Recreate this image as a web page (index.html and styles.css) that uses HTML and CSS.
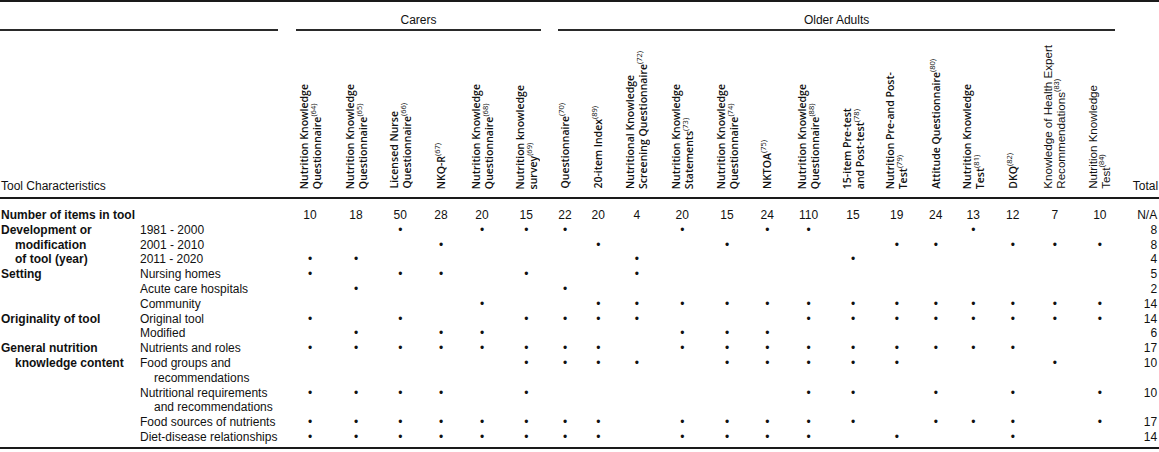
FILE: index.html
```html
<!DOCTYPE html>
<html lang="en">
<head>
<meta charset="utf-8">
<title>Tool Characteristics</title>
<link rel="stylesheet" href="styles.css">
</head>
<body>
<table class="tbl">
  <colgroup>
    <col class="w-a"><col class="w-b">
    <col class="w1"><col class="w2"><col class="w3"><col class="w4"><col class="w5"><col class="w6">
    <col class="w7"><col class="w8"><col class="w9"><col class="w10"><col class="w11"><col class="w12"><col class="w13">
    <col class="w14"><col class="w15"><col class="w16"><col class="w17"><col class="w18"><col class="w19"><col class="w20">
    <col class="w-t">
  </colgroup>
  <thead>
    <tr class="groups">
      <th colspan="2"><div class="rule rule-stub">&nbsp;</div></th>
      <th colspan="6"><div class="rule">Carers</div></th>
      <th colspan="14"><div class="rule">Older Adults</div></th>
      <th></th>
    </tr>
    <tr class="cols">
      <th colspan="2" class="stubhead">Tool Characteristics</th>
      <th class="rot"><div class="vt">Nutrition Knowledge<br>Questionnaire<sup>(64)</sup></div></th>
      <th class="rot"><div class="vt">Nutrition Knowledge<br>Questionnaire<sup>(65)</sup></div></th>
      <th class="rot"><div class="vt">Licensed Nurse<br>Questionnaire<sup>(66)</sup></div></th>
      <th class="rot"><div class="vt">NKQ-R<sup>(67)</sup></div></th>
      <th class="rot"><div class="vt">Nutrition Knowledge<br>Questionnaire<sup>(68)</sup></div></th>
      <th class="rot"><div class="vt">Nutrition knowledge<br>survey<sup>(69)</sup></div></th>
      <th class="rot"><div class="vt">Questionnaire<sup>(70)</sup></div></th>
      <th class="rot"><div class="vt">20-item Index<sup>(89)</sup></div></th>
      <th class="rot"><div class="vt">Nutritional Knowledge<br>Screening Questionnaire<sup>(72)</sup></div></th>
      <th class="rot"><div class="vt">Nutrition Knowledge<br>Statements<sup>(73)</sup></div></th>
      <th class="rot"><div class="vt">Nutrition Knowledge<br>Questionnaire<sup>(74)</sup></div></th>
      <th class="rot"><div class="vt">NKTOA<sup>(75)</sup></div></th>
      <th class="rot"><div class="vt">Nutrition Knowledge<br>Questionnaire<sup>(88)</sup></div></th>
      <th class="rot"><div class="vt">15-item Pre-test<br>and Post-test<sup>(78)</sup></div></th>
      <th class="rot"><div class="vt">Nutrition Pre-and Post-<br>Test<sup>(79)</sup></div></th>
      <th class="rot"><div class="vt">Attitude Questionnaire<sup>(80)</sup></div></th>
      <th class="rot"><div class="vt">Nutrition Knowledge<br>Test<sup>(81)</sup></div></th>
      <th class="rot"><div class="vt">DKQ<sup>(82)</sup></div></th>
      <th class="rot"><div class="vt vt-arial">Knowledge of Health Expert<br>Recommendations<sup>(83)</sup></div></th>
      <th class="rot"><div class="vt vt-arial">Nutrition Knowledge<br>Test<sup>(84)</sup></div></th>
      <th class="totalhead">Total</th>
    </tr>
  </thead>
  <tbody>
    <tr class="first">
      <td colspan="2" class="lab">Number of items in tool</td>
      <td>10</td><td>18</td><td>50</td><td>28</td><td>20</td><td>15</td>
      <td>22</td><td>20</td><td>4</td><td>20</td><td>15</td><td>24</td><td>110</td>
      <td>15</td><td>19</td><td>24</td><td>13</td><td>12</td><td>7</td><td>10</td>
      <td class="tot">N/A</td>
    </tr>
    <tr>
      <td rowspan="3" class="lab">Development or<br>modification<br>of tool (year)</td>
      <td class="sub">1981 - 2000</td>
      <td></td><td></td><td>•</td><td></td><td>•</td><td>•</td>
      <td>•</td><td></td><td></td><td>•</td><td></td><td>•</td><td>•</td>
      <td></td><td></td><td></td><td>•</td><td></td><td></td><td></td>
      <td class="tot">8</td>
    </tr>
    <tr>
      <td class="sub">2001 - 2010</td>
      <td></td><td></td><td></td><td>•</td><td></td><td></td>
      <td></td><td>•</td><td></td><td></td><td>•</td><td></td><td></td>
      <td></td><td>•</td><td>•</td><td></td><td>•</td><td>•</td><td>•</td>
      <td class="tot">8</td>
    </tr>
    <tr>
      <td class="sub">2011 - 2020</td>
      <td>•</td><td>•</td><td></td><td></td><td></td><td></td>
      <td></td><td></td><td>•</td><td></td><td></td><td></td><td></td>
      <td>•</td><td></td><td></td><td></td><td></td><td></td><td></td>
      <td class="tot">4</td>
    </tr>
    <tr>
      <td rowspan="3" class="lab">Setting</td>
      <td class="sub">Nursing homes</td>
      <td>•</td><td></td><td>•</td><td>•</td><td></td><td>•</td>
      <td></td><td></td><td>•</td><td></td><td></td><td></td><td></td>
      <td></td><td></td><td></td><td></td><td></td><td></td><td></td>
      <td class="tot">5</td>
    </tr>
    <tr>
      <td class="sub">Acute care hospitals</td>
      <td></td><td>•</td><td></td><td></td><td></td><td></td>
      <td>•</td><td></td><td></td><td></td><td></td><td></td><td></td>
      <td></td><td></td><td></td><td></td><td></td><td></td><td></td>
      <td class="tot">2</td>
    </tr>
    <tr>
      <td class="sub">Community</td>
      <td></td><td></td><td></td><td></td><td>•</td><td></td>
      <td></td><td>•</td><td>•</td><td>•</td><td>•</td><td>•</td><td>•</td>
      <td>•</td><td>•</td><td>•</td><td>•</td><td>•</td><td>•</td><td>•</td>
      <td class="tot">14</td>
    </tr>
    <tr>
      <td rowspan="2" class="lab">Originality of tool</td>
      <td class="sub">Original tool</td>
      <td>•</td><td></td><td>•</td><td></td><td></td><td>•</td>
      <td>•</td><td>•</td><td>•</td><td></td><td></td><td></td><td>•</td>
      <td>•</td><td>•</td><td>•</td><td>•</td><td>•</td><td>•</td><td>•</td>
      <td class="tot">14</td>
    </tr>
    <tr>
      <td class="sub">Modified</td>
      <td></td><td>•</td><td></td><td>•</td><td>•</td><td></td>
      <td></td><td></td><td></td><td>•</td><td>•</td><td>•</td><td></td>
      <td></td><td></td><td></td><td></td><td></td><td></td><td></td>
      <td class="tot">6</td>
    </tr>
    <tr>
      <td rowspan="5" class="lab">General nutrition<br>knowledge content</td>
      <td class="sub">Nutrients and roles</td>
      <td>•</td><td>•</td><td>•</td><td>•</td><td>•</td><td>•</td>
      <td>•</td><td>•</td><td></td><td>•</td><td>•</td><td>•</td><td>•</td>
      <td>•</td><td>•</td><td>•</td><td>•</td><td>•</td><td></td><td></td>
      <td class="tot">17</td>
    </tr>
    <tr>
      <td class="sub">Food groups and recommendations</td>
      <td></td><td></td><td></td><td></td><td></td><td>•</td>
      <td>•</td><td>•</td><td>•</td><td></td><td>•</td><td>•</td><td>•</td>
      <td>•</td><td>•</td><td></td><td></td><td></td><td>•</td><td></td>
      <td class="tot">10</td>
    </tr>
    <tr>
      <td class="sub">Nutritional requirements and recommendations</td>
      <td>•</td><td>•</td><td>•</td><td>•</td><td></td><td>•</td>
      <td></td><td></td><td></td><td></td><td></td><td></td><td>•</td>
      <td>•</td><td></td><td>•</td><td></td><td>•</td><td></td><td>•</td>
      <td class="tot">10</td>
    </tr>
    <tr>
      <td class="sub">Food sources of nutrients</td>
      <td>•</td><td>•</td><td>•</td><td>•</td><td>•</td><td>•</td>
      <td>•</td><td>•</td><td></td><td>•</td><td>•</td><td>•</td><td>•</td>
      <td>•</td><td></td><td>•</td><td>•</td><td>•</td><td></td><td>•</td>
      <td class="tot">17</td>
    </tr>
    <tr class="last">
      <td class="sub">Diet-disease relationships</td>
      <td>•</td><td>•</td><td>•</td><td>•</td><td>•</td><td>•</td>
      <td>•</td><td>•</td><td></td><td>•</td><td>•</td><td>•</td><td>•</td>
      <td></td><td>•</td><td></td><td></td><td>•</td><td></td><td></td>
      <td class="tot">14</td>
    </tr>
  </tbody>
</table>
</body>
</html>
```

FILE: styles.css
```css
html, body {
  margin: 0;
  padding: 0;
  background: #ffffff;
}

body {
  font-family: "Liberation Sans", Arial, sans-serif;
  font-size: 12px;
  color: #111111;
}

.tbl {
  width: 1159px;
  table-layout: fixed;
  border-collapse: separate;
  border-spacing: 0;
  border-top: 2px solid #1a1a1a;
  border-bottom: 2px solid #1a1a1a;
}

.w-a { width: 140px; }
.w-b { width: 147px; }
.w1 { width: 46px; }
.w2 { width: 46px; }
.w3 { width: 42.5px; }
.w4 { width: 39px; }
.w5 { width: 43px; }
.w6 { width: 45.5px; }
.w7 { width: 32px; }
.w8 { width: 34.5px; }
.w9 { width: 42.5px; }
.w10 { width: 48.5px; }
.w11 { width: 41px; }
.w12 { width: 39.5px; }
.w13 { width: 43px; }
.w14 { width: 46px; }
.w15 { width: 41.5px; }
.w16 { width: 36.5px; }
.w17 { width: 38.5px; }
.w18 { width: 40.5px; }
.w19 { width: 43.5px; }
.w20 { width: 46.5px; }
.w-t { width: 36px; }

th {
  font-weight: normal;
  padding: 0;
}

/* group row */
.groups { height: 29px; }
.groups th {
  vertical-align: top;
}
.rule {
  margin: 0 8px 0 9px;
  padding-top: 11px;
  height: 16px;
  line-height: 15px;
  text-align: center;
  border-bottom: 2px solid #2a2a2a;
}
.rule.rule-stub {
  margin: 0 9px 0 0;
}

/* column heads row */
.cols { height: 168px; }
.cols th {
  vertical-align: bottom;
  border-bottom: 2px solid #1a1a1a;
}
.stubhead {
  text-align: left;
  line-height: 15px;
  padding-bottom: 3px !important;
  padding-left: 1px !important;
}
.totalhead {
  text-align: right;
  line-height: 15px;
  padding-bottom: 3px !important;
  padding-right: 1px !important;
}
.rot {
  text-align: center;
  line-height: 0;
  padding-bottom: 8px !important;
}
.vt {
  display: inline-block;
  vertical-align: bottom;
  writing-mode: vertical-rl;
  transform: rotate(180deg);
  white-space: nowrap;
  text-align: start;
  font-family: "Open Sans", "Noto Sans", sans-serif;
  font-weight: 600;
  font-size: 10.5px;
  line-height: 12.5px;
  color: #111111;
}
.vt.vt-arial {
  font-family: "Liberation Sans", Arial, sans-serif;
  font-weight: normal;
  font-size: 11.6px;
}
.vt sup {
  font-size: 7.5px;
  font-weight: normal;
  line-height: 0;
  vertical-align: 4px;
}

/* body */
tbody td {
  padding: 0;
  line-height: 14.8px;
  vertical-align: top;
  text-align: center;
}
tbody tr.first td {
  padding-top: 9px;
}
tbody tr.last td {
  padding-bottom: 2px;
}
tbody td.lab {
  text-align: left;
  font-weight: bold;
  padding-left: 15px;
  text-indent: -14px;
}
tbody td.sub {
  text-align: left;
  padding-left: 14px;
  text-indent: -14px;
  padding-right: 4px;
}
tbody td.tot {
  text-align: right;
  padding-right: 2px;
}
```
